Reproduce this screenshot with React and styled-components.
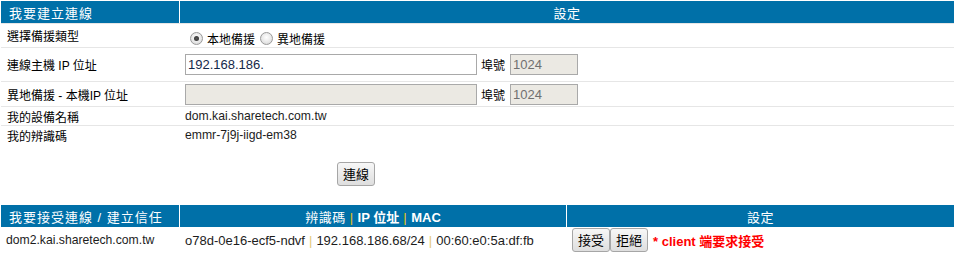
import React from "react";
import styled, { createGlobalStyle } from "styled-components";

const Global = createGlobalStyle`
  html, body { margin: 0; padding: 0; background: #fff; }
  body { font-family: "Liberation Sans", "Noto Sans CJK TC", sans-serif; font-size: 12px; color: #000; }
  * { box-sizing: border-box; }
`;

const Page = styled.div`
  padding: 1px 0 0 1px;
  width: 954px;
`;

const Table = styled.table`
  width: 953px;
  border-collapse: separate;
  border-spacing: 0;
  table-layout: fixed;
`;

const HeadCell = styled.th`
  background: #0070a8;
  color: #fff;
  font-weight: normal;
  font-size: 13px;
  letter-spacing: ${(p) => (p.$align === "left" ? "1px" : "0.5px")};
  height: 22px;
  padding: 0 ${(p) => (p.$align === "left" ? "8px" : "0")};
  text-align: ${(p) => p.$align || "center"};
  border-right: ${(p) => (p.$last ? "none" : "1px solid #fff")};
  width: ${(p) => (p.$w ? `${p.$w}px` : "auto")};
  white-space: nowrap;
`;

const BodyRow = styled.tr`
  & > td {
    border-top: ${(p) => (p.$line ? "1px solid #e6e6e6" : "none")};
    height: ${(p) => p.$h}px;
  }
`;

const Label = styled.td`
  padding: 0 6px;
  font-size: 12px;
  vertical-align: middle;
  white-space: nowrap;
`;

const Value = styled.td`
  padding: 0 5px;
  font-size: ${(p) => (p.$tight ? "12.2px" : "13px")};
  color: #1c1c1c;
  vertical-align: middle;
  white-space: nowrap;
`;

const Inline = styled.div`
  display: flex;
  align-items: center;
  gap: ${(p) => p.$gap || 0}px;
`;

const RadioLabel = styled.label`
  display: inline-flex;
  align-items: center;
  gap: 4px;
  font-size: 12px;
  color: #000;
  margin-left: ${(p) => p.$ml || 0}px;
  margin-top: 5px;
`;

const Radio = styled.input.attrs({ type: "radio" })`
  appearance: none;
  margin: 0;
  width: 13px;
  height: 13px;
  border-radius: 50%;
  border: 1px solid #9a9a9a;
  background: radial-gradient(circle at 50% 40%, #ffffff 0%, #e6e6e6 60%, #cfcfcf 100%);
  position: relative;
  &:checked::after {
    content: "";
    position: absolute;
    left: 3px;
    top: 3px;
    width: 5px;
    height: 5px;
    border-radius: 50%;
    background: radial-gradient(circle, #555 0%, #2e2e2e 100%);
  }
`;

const TextInput = styled.input`
  width: ${(p) => p.$w}px;
  height: 21px;
  border: 1px solid #a9a9a9;
  background: ${(p) => (p.disabled ? "#ebe9e3" : "#fff")};
  color: ${(p) => (p.disabled ? "#707070" : "#14284a")};
  font-family: "Liberation Sans", sans-serif;
  font-size: 13px;
  padding: 0 2px;
  margin: 0;
`;

const PortText = styled.span`
  font-size: 12px;
  color: #000;
  margin: 0 5px 0 4px;
`;

const ButtonBar = styled.div`
  padding: 18px 0 19px 336px;
  height: 61px;
`;

const Btn = styled.button`
  height: 24px;
  padding: 0 5px;
  margin: 0;
  border: 1px solid #a6a6a6;
  border-radius: 3px;
  background: linear-gradient(#f7f7f7, #dedede);
  font-family: "Noto Sans CJK TC", sans-serif;
  font-size: 13px;
  color: #000;
  line-height: 20px;
`;

const Sep = styled.span`
  color: ${(p) => (p.$head ? "#f2c417" : "#e3c878")};
  margin: 0 4px;
`;

const Bold = styled.b`
  font-weight: bold;
  letter-spacing: 0;
`;

const Warn = styled.span`
  color: #ff0000;
  font-weight: bold;
  font-size: 13px;
  margin-left: 5px;
`;

export default function App() {
  return (
    <Page>
      <Global />
      <Table>
        <thead>
          <tr>
            <HeadCell $align="left" $w={179}>我要建立連線</HeadCell>
            <HeadCell $last>設定</HeadCell>
          </tr>
        </thead>
        <tbody>
          <BodyRow $h={24} $line>
            <Label>選擇備援類型</Label>
            <Value>
              <Inline>
                <RadioLabel $ml={5}>
                  <Radio name="t" defaultChecked />
                  本地備援
                </RadioLabel>
                <RadioLabel $ml={5}>
                  <Radio name="t" />
                  異地備援
                </RadioLabel>
              </Inline>
            </Value>
          </BodyRow>
          <BodyRow $h={34} $line>
            <Label>連線主機 IP 位址</Label>
            <Value>
              <Inline>
                <TextInput $w={292} defaultValue="192.168.186." />
                <PortText>埠號</PortText>
                <TextInput $w={68} disabled defaultValue="1024" />
              </Inline>
            </Value>
          </BodyRow>
          <BodyRow $h={25} $line>
            <Label>異地備援 - 本機IP 位址</Label>
            <Value>
              <Inline>
                <TextInput $w={292} disabled defaultValue="" />
                <PortText>埠號</PortText>
                <TextInput $w={68} disabled defaultValue="1024" />
              </Inline>
            </Value>
          </BodyRow>
          <BodyRow $h={19} $line>
            <Label>我的設備名稱</Label>
            <Value $tight>dom.kai.sharetech.com.tw</Value>
          </BodyRow>
          <BodyRow $h={19} $line>
            <Label>我的辨識碼</Label>
            <Value $tight>emmr-7j9j-iigd-em38</Value>
          </BodyRow>
        </tbody>
      </Table>
      <ButtonBar>
        <Btn>連線</Btn>
      </ButtonBar>
      <Table>
        <thead>
          <tr>
            <HeadCell $align="left" $w={179}>我要接受連線 / 建立信任</HeadCell>
            <HeadCell $w={387}>
              辨識碼<Sep $head>|</Sep>
              <Bold>IP 位址</Bold>
              <Sep $head>|</Sep>
              <Bold>MAC</Bold>
            </HeadCell>
            <HeadCell $last>設定</HeadCell>
          </tr>
        </thead>
        <tbody>
          <BodyRow $h={26}>
            <Value $tight>dom2.kai.sharetech.com.tw</Value>
            <Value>
              o78d-0e16-ecf5-ndvf<Sep>|</Sep>192.168.186.68/24<Sep>|</Sep>00:60:e0:5a:df:fb
            </Value>
            <Value>
              <Inline>
                <Btn>接受</Btn>
                <Btn>拒絕</Btn>
                <Warn>* client 端要求接受</Warn>
              </Inline>
            </Value>
          </BodyRow>
        </tbody>
      </Table>
    </Page>
  );
}
